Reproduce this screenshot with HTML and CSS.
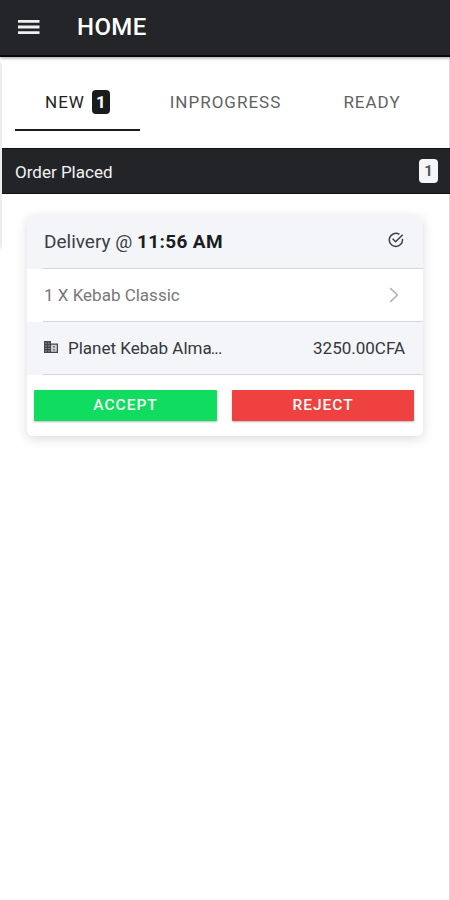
FILE: index.html
```html
<!DOCTYPE html>
<html lang="en">
<head>
<meta charset="utf-8">
<title>Home</title>
<link rel="stylesheet" href="styles.css">
</head>
<body>
<div class="app">
  <header class="toolbar">
    <svg class="menu-icon" viewBox="0 0 22 16"><path d="M0 2.3h21.5M0 8h21.5M0 13.7h21.5" stroke="currentColor" stroke-width="2.8"/></svg>
    <h1 class="title">HOME</h1>
  </header>
  <nav class="tabs">
    <a class="tab tab-active"><span>NEW</span><span class="badge badge-dark">1</span></a>
    <a class="tab tab-progress"><span>INPROGRESS</span></a>
    <a class="tab tab-ready"><span>READY</span></a>
  </nav>
  <div class="section-bar">
    <span class="section-name">Order Placed</span>
    <span class="badge badge-light">1</span>
  </div>
  <main class="content">
    <article class="card">
      <div class="row row-head">
        <span class="delivery">Delivery @ <b>11:56 AM</b></span>
        <svg class="check-icon" viewBox="0 0 16 16" fill="none" stroke="currentColor" stroke-width="1.5"><path d="M14.4 6.8A6.6 6.6 0 1 1 11.4 2.3"/><path d="M4.6 6.8L7.6 9.8L14.7 2.7"/></svg>
      </div>
      <div class="row row-item">
        <span class="item-name">1 X Kebab Classic</span>
        <svg class="chevron" viewBox="0 0 10 16" fill="none" stroke="currentColor" stroke-width="1.7"><path d="M1.2 1.2L8.3 8L1.2 14.8"/></svg>
      </div>
      <div class="row row-total">
        <span class="vendor">
          <svg class="building" viewBox="0 0 14 12"><path fill="#44474a" d="M0 0h7v2.5h7V12H0z"/><path fill="#92959a" d="M1.2 1.5h1.5v1.2H1.2zM4.2 1.5h1.5v1.2H4.2zM1.2 4.2h1.5v1.2H1.2zM4.2 4.2h1.5v1.2H4.2zM1.2 6.9h1.5v1.2H1.2zM4.2 6.9h1.5v1.2H4.2zM1.2 9.6h1.5v1.2H1.2zM4.2 9.6h1.5v1.2H4.2z"/><path fill="#c9ccd0" d="M7 3.7h5.8v7.1H7z"/><path fill="#777a7e" d="M9 5h2v1.4H9zM9 8h2v1.4H9z"/></svg>
          <span class="vendor-name">Planet Kebab Alma<span class="dots">...</span></span>
        </span>
        <span class="price">3250.00CFA</span>
      </div>
      <div class="actions">
        <button class="btn btn-accept">ACCEPT</button>
        <button class="btn btn-reject">REJECT</button>
      </div>
    </article>
  </main>
  <div class="edge-handle"></div>
</div>
</body>
</html>
```
FILE: styles.css
```css
* { box-sizing: border-box; }
body {
  margin: 0;
  background: #fff;
  font-family: Roboto, "Liberation Sans", sans-serif;
}
.app {
  position: relative;
  height: 900px;
  border-right: 1px solid #d6d6d8;
}
.toolbar {
  display: flex;
  align-items: center;
  height: 57px;
  margin-right: -1px;
  padding: 0 0 1px 18px;
  background: #242529;
  border-bottom: 2px solid #08080a;
  box-shadow: 0 1px 3px rgba(0, 0, 0, .4);
  color: #fff;
}
.menu-icon { width: 22px; height: 16px; color: #f0f0f0; }
.title {
  margin: 0 0 0 37px;
  font-size: 24px;
  font-weight: 500;
  line-height: 28px;
  letter-spacing: .4px;
}
.tabs {
  display: flex;
  height: 91px;
  padding: 17px 0 0 15px;
}
.tab {
  display: flex;
  align-items: center;
  justify-content: center;
  height: 57px;
  padding-bottom: 2px;
  color: #626262;
  font-size: 17px;
  font-weight: 400;
  letter-spacing: 1px;
}
.tab-active {
  width: 125px;
  gap: 7px;
  padding-bottom: 0;
  border-bottom: 2px solid #1c1d20;
  color: #222;
}
.tab-progress { width: 171px; }
.tab-ready { width: 122px; }
.badge {
  display: flex;
  align-items: center;
  justify-content: center;
  border-radius: 4px;
  font-weight: 700;
  letter-spacing: 0;
}
.badge-dark { width: 18px; height: 24px; background: #1a1b1e; color: #fff; font-size: 17px; }
.badge-light { width: 19px; height: 24px; padding-bottom: 1px; background: #f5f6f8; color: #55575a; font-size: 15px; }
.section-bar {
  display: flex;
  align-items: center;
  justify-content: space-between;
  height: 46px;
  margin-right: -1px;
  padding: 0 12px 0 15px;
  background: #222428;
  border-top: 1px solid #101113;
  border-bottom: 1px solid #101113;
  color: #f2f2f2;
}
.section-name { padding-top: 1px; font-size: 17px; }
.content { padding: 21px 26px 0 27px; }
.card {
  height: 221px;
  overflow: hidden;
  border-radius: 6px;
  background: #fff;
  box-shadow: 0 3px 12px rgba(0, 0, 0, .14);
}
.row {
  position: relative;
  display: flex;
  align-items: center;
  justify-content: space-between;
  height: 53px;
  padding: 0 18px 2px 17px;
  white-space: nowrap;
}
.row::after {
  content: "";
  position: absolute;
  left: 16px;
  right: 0;
  bottom: 0;
  height: 1px;
  background: #d5d7da;
}
.row-head { height: 54px; padding-bottom: 1px; background: #f3f5f9; color: #3c3e42; }
.delivery { font-size: 19px; }
.delivery b { font-weight: 700; color: #1b1c1f; letter-spacing: .35px; }
.check-icon { width: 16px; height: 16px; margin: 0 1px 4px 0; color: #3e4043; }
.item-name { color: #777; font-size: 17px; }
.chevron { width: 10px; height: 16px; margin-right: 6px; color: #b5b5b5; }
.row-total { background: #f3f5f9; color: #35373a; font-size: 17px; }
.vendor { display: flex; align-items: center; gap: 10px; }
.dots { margin-left: -1px; letter-spacing: -.8px; }
.building { width: 14px; height: 12px; margin-bottom: 2px; }
.actions {
  display: grid;
  grid-template-columns: 183px 182px;
  gap: 15px;
  padding: 15px 7px 0;
}
.btn {
  height: 31px;
  border: 0;
  border-radius: 1px;
  padding: 0;
  color: #f5fff8;
  font: 500 15.5px/31px Roboto, sans-serif;
  letter-spacing: 1px;
  box-shadow: 0 1px 2px rgba(0, 0, 0, .28);
}
.btn-accept { background: #10dc60; }
.btn-reject { background: #f04141; }
.edge-handle {
  position: absolute;
  left: -10px;
  top: 60px;
  width: 12px;
  height: 191px;
  border-radius: 6px;
  background: #ededee;
}
```
